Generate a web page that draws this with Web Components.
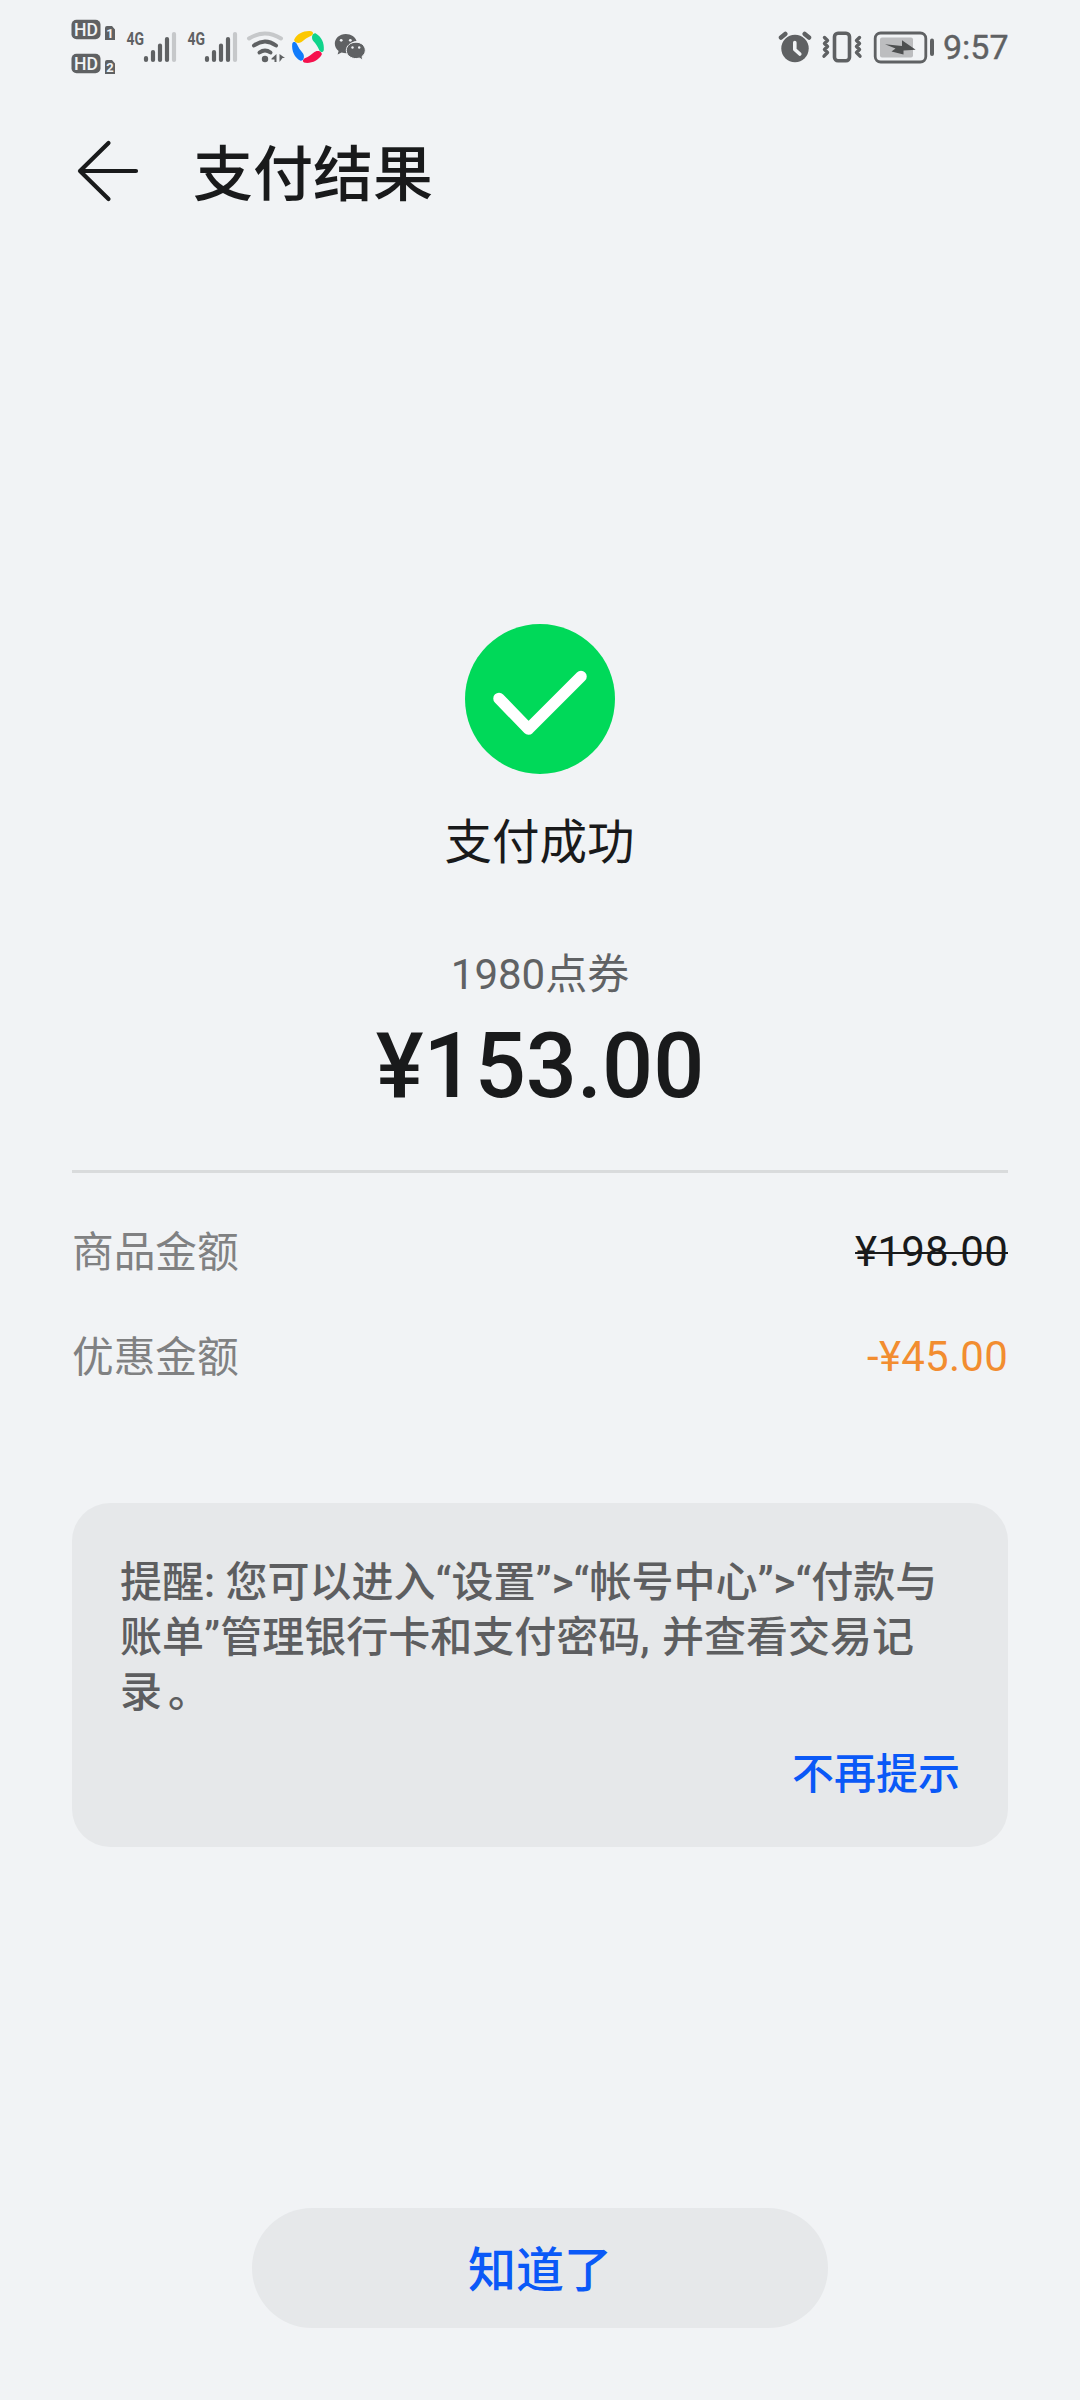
<!DOCTYPE html>
<html lang="zh-CN">
<head>
<meta charset="utf-8">
<title>支付结果</title>
<style>
html,body{margin:0;padding:0;background:#f1f3f5}
body{font-family:Roboto,"Noto Sans CJK SC",sans-serif;color:#191a1b;width:1080px;height:2400px;overflow:hidden}
</style>
</head>
<body>
<pay-screen></pay-screen>
<script>
function define(name, css, html){
  customElements.define(name, class extends HTMLElement{
    constructor(){
      super();
      this.attachShadow({mode:'open'}).innerHTML = '<style>*{box-sizing:border-box}svg{display:block;flex:none}' + css + '</style>' + html;
    }
  });
}

define('sim-badges', ':host{display:block}',
`<svg width="46" height="60" viewBox="70 17 46 60" fill="#5f6163">
<rect x="71.5" y="19.7" width="29" height="19.6" rx="5"/><rect x="71.5" y="53.7" width="29" height="19.6" rx="5"/>
<path d="M105 28q0-2 2-2h5l3 3.5V40h-10zM105 62q0-2 2-2h5l3 3.5V74h-10z"/>
<g fill="#f1f3f5" font-family="Roboto" font-weight="700" text-anchor="middle">
<text x="86" y="36" font-size="18" font-weight="500" textLength="24" lengthAdjust="spacingAndGlyphs">HD</text>
<text x="86" y="70" font-size="18" font-weight="500" textLength="24" lengthAdjust="spacingAndGlyphs">HD</text>
<text x="110" y="38" font-size="13">1</text><text x="110" y="72" font-size="13">2</text></g></svg>`);

define('cell-signal', ':host{display:block}',
`<svg width="52" height="36" viewBox="125 28 52 36">
<text x="126.5" y="44" font-family="Roboto" font-weight="700" font-size="18.5" fill="#5f6163" textLength="17.5" lengthAdjust="spacingAndGlyphs">4G</text>
<g stroke="#5f6163" stroke-width="4.2" stroke-linecap="round"><path d="M146 57v2M153 51v8M160 44.5V59M167 38v21"/><path d="M174 33v26" stroke="#c6c8ca"/></g></svg>`);

define('wifi-signal', ':host{display:block}',
`<svg width="40" height="36" viewBox="246 28 40 36"><g fill="none" stroke="#5f6163" stroke-width="4" stroke-linecap="round">
<path d="M249 37.5Q264.8 27.5 281 37.5" stroke="#c6c8ca"/><path d="M254 44.5Q265 36.5 276 44.5"/><path d="M259.5 51.5Q265 47.5 270.5 51.5"/></g>
<g fill="#5f6163"><circle cx="265" cy="58" r="3.2"/><path d="M271.5 57.5L276.5 53V61H274.5V58.5H271.5ZM279.5 53L285 57H282.5L279.5 61Z"/></g></svg>`);

const petal = 'M-13.8-7.5C-10.5-13.5-4-16.5 3-15.8C5.8-15.2 5.5-12.5 3.2-11.3C-1-9.4-3.5-7.5-5.5-5.7C-8-3.4-11.5-3.8-13-5.2Q-14-6.3-13.8-7.5Z';
define('app-badge', ':host{display:block}',
`<svg width="34" height="34" viewBox="-17 -17 34 34">
<path d="${petal}" fill="#fcc800"/><path transform="rotate(90)" d="${petal}" fill="#10d48b"/>
<path transform="rotate(180)" d="${petal}" fill="#f5114d"/><path transform="rotate(270)" d="${petal}" fill="#127cfb"/></svg>`);

define('chat-badge', ':host{display:block}',
`<svg width="34" height="34" viewBox="333 30 34 34"><g fill="#5f6163">
<path d="M345.8 34C339.5 34 334.8 38.4 334.8 43.6C334.8 46.7 336.3 49.2 338.6 51L337.6 54.6L341.6 52.6Q345.5 53.7 349 53C347 46 351 41.5 356.5 41C355.5 37 351 34 345.8 34Z"/>
<path d="M356 42.2C361.5 42.2 365.3 46 365.3 50.3C365.3 53 363.9 55 362 56.5L362.8 60L359.3 58.1C352.5 60 346.3 56 346.3 50.3C346.3 45.8 350.5 42.2 356 42.2Z" stroke="#f1f3f5" stroke-width="1"/></g>
<g fill="#f1f3f5"><circle cx="341.2" cy="40.3" r="1.4"/><circle cx="350.3" cy="40.3" r="1.4"/><circle cx="352.5" cy="47.5" r="1.2"/><circle cx="359.2" cy="47.5" r="1.2"/></g></svg>`);

define('alarm-badge', ':host{display:block}',
`<svg width="34" height="34" viewBox="778 29 34 34"><circle cx="795" cy="47.5" r="13.7" fill="#5f6163"/>
<g fill="none" stroke-linecap="round"><path d="M781 36.5l4.3-3.5M809 36.5l-4.3-3.5" stroke="#5f6163" stroke-width="4.5"/><path d="M794.8 41.5V48.5L799.8 53" stroke="#f1f3f5" stroke-width="3.6" stroke-linejoin="round"/></g></svg>`);

define('vibrate-badge', ':host{display:block}',
`<svg width="42" height="36" viewBox="821 28 42 36" fill="none" stroke="#5f6163"><rect x="834.5" y="32.3" width="15" height="27.4" rx="3.5" stroke-width="3.6"/>
<path d="M824.5 36.5L827.5 39.5L824.5 42.5L827.5 45.5L824.5 48.5L827.5 51.5L824 55.2M859.5 36.5L856.5 39.5L859.5 42.5L856.5 45.5L859.5 48.5L856.5 51.5L860 55.2" stroke-width="3.4" stroke-linecap="round" stroke-linejoin="round"/></svg>`);

define('battery-badge', ':host{display:block}',
`<svg width="62" height="36" viewBox="873 28 62 36"><rect x="875.2" y="32" width="50.6" height="29" rx="5.5" fill="none" stroke="#5f6163" stroke-width="2.8"/>
<rect x="880" y="36.5" width="33" height="20" rx="2" fill="#bcbdbf"/><path d="M885 43.3L902 45V39.3L915.7 48.8L903.5 49.5V53.5L891.5 50.5L895.5 47.5Z" fill="#4d4f50"/>
<path d="M932 39.5v13.5" stroke="#5f6163" stroke-width="4" stroke-linecap="round"/></svg>`);

define('status-bar', `:host{display:flex;justify-content:space-between;height:93px;padding:0 72px 0 70px;color:#5f6163}
div{display:flex;align-items:center}.l{gap:9px}wifi-signal{margin-left:-1px}app-badge{margin-left:-4px}chat-badge{margin-left:-1px}.r{gap:9px}battery-badge{margin:0 -1px 0 1px}time{font-size:34px;line-height:40px;width:65px;-webkit-text-stroke:.4px #5f6163}`,
`<div class="l"><sim-badges></sim-badges><cell-signal></cell-signal><cell-signal></cell-signal><wifi-signal></wifi-signal><app-badge></app-badge><chat-badge></chat-badge></div>
<div class="r"><alarm-badge></alarm-badge><vibrate-badge></vibrate-badge><battery-badge></battery-badge><time>9:57</time></div>`);

define('title-bar', `:host{display:flex;align-items:center;height:162px;padding-left:76px;gap:53px}
h1{margin:3px 0 0;font-size:60px;line-height:80px;font-weight:500}svg{margin-top:-6px}`,
`<svg width="64" height="64" viewBox="76 139 64 64" fill="none" stroke="#191a1b" stroke-width="4.2" stroke-linecap="round" stroke-linejoin="round"><path d="M108.5 143L80 171L108.5 199M80 171H136"/></svg><h1><slot></slot></h1>`);

define('pay-result', `:host{display:flex;flex-direction:column;align-items:center;padding-top:369px}
.s{font-size:47.5px;line-height:64px;margin:37px 1px 0 0}.n{font-size:42px;line-height:56px;margin-top:72px;color:#606264}.a{font-size:90px;line-height:106px;margin-top:11px;font-weight:500}`,
`<svg width="150" height="150" viewBox="0 0 150 150"><circle cx="75" cy="75" r="75" fill="#00d959"/><path d="M34 74.5L63.5 105L116 52.5" fill="none" stroke="#fff" stroke-width="11.5" stroke-linecap="round" stroke-linejoin="round"/></svg>
<div class="s"><slot name="state"></slot></div><div class="n"><slot name="name"></slot></div><div class="a"><slot></slot></div>`);

define('amount-list', `:host{display:flex;flex-direction:column;gap:49px;margin:50px 72px 0;padding-top:51px;border-top:3px solid #d9dbdc}`, `<slot></slot>`);
define('amount-row', `:host{display:flex;justify-content:space-between;font-size:42px;line-height:56px}.k{color:#808182;font-size:41.7px;padding-top:1px;margin-bottom:-1px}.v{letter-spacing:.25px}
:host([kind=struck]) .v{text-decoration:line-through;text-decoration-thickness:2px}:host([kind=off]) .v{color:#f28d30}`,
`<span class="k"><slot name="label"></slot></span><span class="v"><slot></slot></span>`);

define('tip-card', `:host{display:flex;flex-direction:column;height:344px;margin:118px 72px 0;padding:52px 48px 0;border-radius:38px;background:#e6e8ea;font-weight:500;font-size:42px}
.t{line-height:55px;color:#5d5e60;white-space:nowrap}.a{align-self:flex-end;margin-top:27px;line-height:56px;color:#0a59f7}`,
`<div class="t"><slot></slot></div><span class="a"><slot name="action"></slot></span>`);

define('pill-button', `:host{display:flex;align-items:center;justify-content:center;width:576px;height:120px;padding-top:5px;margin:auto auto 72px;border-radius:60px;background:#e6e8ea;color:#0a59f7;font-size:48px;line-height:64px;font-weight:500;box-sizing:border-box}`, `<slot></slot>`);

define('pay-screen', `:host{display:flex;flex-direction:column;width:1080px;height:2400px;background:#f1f3f5}.stop{margin-left:6px}.comma{margin-right:2px}`,
`<status-bar></status-bar>
<title-bar>支付结果</title-bar>
<pay-result><span slot="state">支付成功</span><span slot="name">1980点券</span>¥153.00</pay-result>
<amount-list><amount-row kind="struck"><span slot="label">商品金额</span>¥198.00</amount-row><amount-row kind="off"><span slot="label">优惠金额</span>-¥45.00</amount-row></amount-list>
<tip-card>提醒: 您可以进入“设置”&gt;“帐号中心”&gt;“付款与<br>账单”管理银行卡和支付密码<span class="comma">,</span> 并查看交易记<br>录<span class="stop">。</span><span slot="action">不再提示</span></tip-card>
<pill-button>知道了</pill-button>`);
</script>
</body>
</html>
